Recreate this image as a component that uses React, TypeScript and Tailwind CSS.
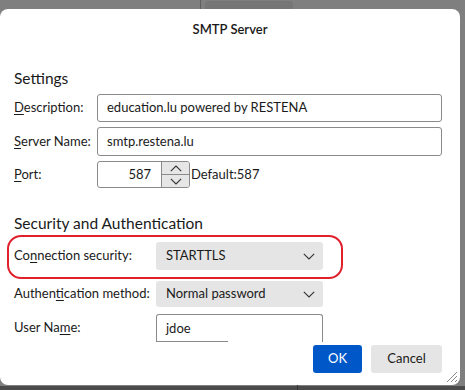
import React from "react";

const font = { fontFamily: "Lato, 'Noto Sans', sans-serif" };

function Chevron({ up = false, className = "" }: { up?: boolean; className?: string }) {
  return (
    <svg width="12" height="7" viewBox="0 0 12 7" className={className}>
      <path
        d={up ? "M0.8 6.2 L6 1 L11.2 6.2" : "M0.8 0.8 L6 6 L11.2 0.8"}
        fill="none"
        stroke="#333"
        strokeWidth="1.1"
      />
    </svg>
  );
}

function U({ children }: { children: React.ReactNode }) {
  return <span className="underline underline-offset-[2px] decoration-[1px]">{children}</span>;
}

export default function App() {
  return (
    <div className="w-[465px] h-[390px] bg-[#7f7f7f] flex flex-col overflow-hidden relative text-[#1a1a1a]" style={font}>
      {/* background top */}
      <div className="absolute left-[200px] top-0 w-[1px] h-[9px] bg-[#5e5e5e]" />
      <div className="absolute left-[205px] top-[1px] w-[88px] h-[10px] rounded-[4px] bg-[#767676]" />
      <div className="absolute left-0 top-[386px] w-[465px] h-[4px] bg-[#4b4b4b]" />
      <div className="absolute left-[297px] top-[384px] w-[1px] h-[6px] bg-[#333]" />

      <div className="relative mt-[9px] w-[460px] h-[376px] bg-white rounded-[8px] flex flex-col shrink-0">
        <div className="h-[42px] flex items-center justify-center text-[13px] font-semibold">SMTP Server</div>

        <div className="pl-[14px] flex flex-col whitespace-nowrap">
          <div className="mt-[17px] h-[22px] flex items-center text-[15.5px]">Settings</div>

          <div className="mt-[4px] h-[28px] flex items-center text-[13px]">
            <div className="w-[83px]"><U>D</U>escription:</div>
            <div className="w-[345px] h-[28px] border border-[#8a8a8a] rounded-[3px] flex items-center pl-[9px]">
              education.lu powered by RESTENA
            </div>
          </div>

          <div className="mt-[5px] h-[29px] flex items-center text-[13px]">
            <div className="w-[83px]"><U>S</U>erver Name:</div>
            <div className="w-[345px] h-[29px] border border-[#8a8a8a] rounded-[3px] flex items-center pl-[9px]">
              smtp.restena.lu
            </div>
          </div>

          <div className="mt-[5px] h-[27px] flex items-center text-[13px]">
            <div className="w-[83px]"><U>P</U>ort:</div>
            <div className="w-[93px] h-[27px] border border-[#8a8a8a] rounded-[3px] flex overflow-hidden">
              <div className="flex-1 flex items-center justify-end pr-[10px]">587</div>
              <div className="w-[28px] flex flex-col border-l border-[#8a8a8a] bg-[#e6e6e6]">
                <div className="flex-1 flex items-center justify-center border-b border-[#8a8a8a]">
                  <Chevron up />
                </div>
                <div className="flex-1 flex items-center justify-center">
                  <Chevron />
                </div>
              </div>
            </div>
            <div className="ml-[1px]">Default:587</div>
          </div>

          <div className="mt-[25px] h-[22px] flex items-center text-[15.5px]">Security and Authentication</div>

          <div className="mt-[7px] h-[28px] flex items-center text-[13px]">
            <div className="w-[142px]">Co<U>n</U>nection security:</div>
            <div className="w-[167px] h-[28px] bg-[#e5e5e5] rounded-[3px] flex items-center justify-between pl-[10px] pr-[8px]">
              <span>STARTTLS</span>
              <Chevron />
            </div>
          </div>

          <div className="mt-[11px] h-[26px] flex items-center text-[13px]">
            <div className="w-[142px]">Authen<U>t</U>ication method:</div>
            <div className="w-[167px] h-[26px] bg-[#e5e5e5] rounded-[3px] flex items-center justify-between pl-[10px] pr-[8px]">
              <span>Normal password</span>
              <Chevron />
            </div>
          </div>

          <div className="mt-[7px] h-[28px] flex items-center text-[13px]">
            <div className="w-[142px]">User Na<U>m</U>e:</div>
            <div className="relative w-[167px] h-[28px] border border-b-0 border-[#8a8a8a] rounded-t-[3px] flex items-center pl-[9px]">
              jdoe
              <div className="absolute left-[-1px] bottom-0 w-[72px] h-[1px] bg-[#8a8a8a] rounded-bl-[3px]" />
            </div>
          </div>

          <div className="mt-[3px] h-[28px] flex justify-end gap-[9px] pr-[18px] text-[13px]">
            <div className="w-[49px] h-[28px] rounded-[3px] bg-[#0058c8] text-white flex items-center justify-center">OK</div>
            <div className="w-[71px] h-[28px] rounded-[3px] bg-[#e5e5e5] flex items-center justify-center">Cancel</div>
          </div>
        </div>

        {/* annotation overlay */}
        <div className="absolute left-[7px] top-[226px] w-[336px] h-[44px] border-[2.5px] border-[#e0202b] rounded-[14px] pointer-events-none" />

        {/* resize grip */}
        <svg className="absolute right-[2px] bottom-[2px]" width="14" height="14" viewBox="0 0 14 14">
          <path d="M13 3 L3 13 M13 7 L7 13 M13 11 L11 13" stroke="#8a8a8a" strokeWidth="1" />
        </svg>
      </div>
    </div>
  );
}
